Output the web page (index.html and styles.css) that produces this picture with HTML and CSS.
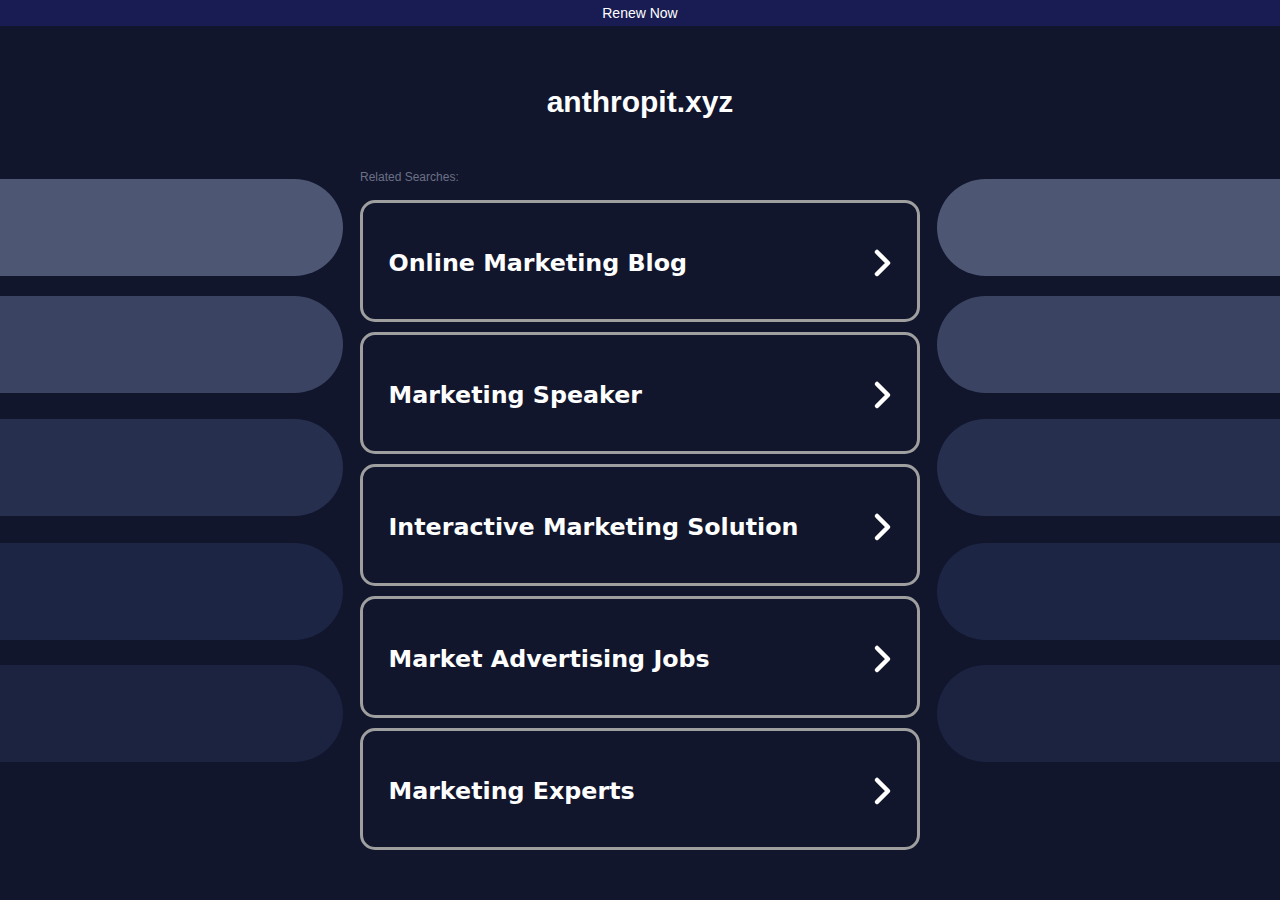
FILE: index.html
```html
<!DOCTYPE html>
<html>
<head>
<meta charset="utf-8">
<link rel="stylesheet" href="styles.css">
</head>
<body>
<div class="topbar"><a class="renew" href="#">Renew Now</a></div>
<h1 class="domain">anthropit.xyz</h1>
<div class="layout">
  <div class="side side-left">
    <div class="pill p1"></div>
    <div class="pill p2"></div>
    <div class="pill p3"></div>
    <div class="pill p4"></div>
    <div class="pill p5"></div>
  </div>
  <div class="center">
    <div class="related">Related Searches:</div>
    <div class="cards">
      <a class="card" href="#"><span class="label">Online Marketing Blog</span><svg class="chev" viewBox="0 0 20 30"><path d="M4 4 L15 15 L4 26" fill="none" stroke="#fff" stroke-width="4.5" stroke-linecap="round" stroke-linejoin="round"/></svg></a>
      <a class="card" href="#"><span class="label">Marketing Speaker</span><svg class="chev" viewBox="0 0 20 30"><path d="M4 4 L15 15 L4 26" fill="none" stroke="#fff" stroke-width="4.5" stroke-linecap="round" stroke-linejoin="round"/></svg></a>
      <a class="card" href="#"><span class="label">Interactive Marketing Solution</span><svg class="chev" viewBox="0 0 20 30"><path d="M4 4 L15 15 L4 26" fill="none" stroke="#fff" stroke-width="4.5" stroke-linecap="round" stroke-linejoin="round"/></svg></a>
      <a class="card" href="#"><span class="label">Market Advertising Jobs</span><svg class="chev" viewBox="0 0 20 30"><path d="M4 4 L15 15 L4 26" fill="none" stroke="#fff" stroke-width="4.5" stroke-linecap="round" stroke-linejoin="round"/></svg></a>
      <a class="card" href="#"><span class="label">Marketing Experts</span><svg class="chev" viewBox="0 0 20 30"><path d="M4 4 L15 15 L4 26" fill="none" stroke="#fff" stroke-width="4.5" stroke-linecap="round" stroke-linejoin="round"/></svg></a>
    </div>
  </div>
  <div class="side side-right">
    <div class="pill p1"></div>
    <div class="pill p2"></div>
    <div class="pill p3"></div>
    <div class="pill p4"></div>
    <div class="pill p5"></div>
  </div>
</div>
</body>
</html>
```
FILE: styles.css
```css
html, body {
  margin: 0;
  padding: 0;
  background: #11162d;
  height: 100%;
}
body {
  font-family: "Liberation Sans", Arial, sans-serif;
  overflow: hidden;
}
.topbar {
  height: 26px;
  background: #181c52;
  display: flex;
  justify-content: center;
  align-items: center;
}
.renew {
  color: #ffffff;
  font-size: 14px;
  text-decoration: none;
  line-height: 26px;
}
.domain {
  margin: 58px 0 0;
  text-align: center;
  color: #ffffff;
  font-size: 30px;
  font-weight: bold;
  line-height: 36px;
}
.layout {
  display: grid;
  grid-template-columns: 1fr 560px 1fr;
  column-gap: 17px;
  margin-top: 50px;
}
.side {
  display: flex;
  flex-direction: column;
  padding-top: 9px;
}
.pill {
  height: 97px;
  border-radius: 48.5px;
}
.side-left .pill { border-top-left-radius: 0; border-bottom-left-radius: 0; }
.side-right .pill { border-top-right-radius: 0; border-bottom-right-radius: 0; }
.p1 { background: #4d5672; }
.p2 { background: #3a4462; margin-top: 20px; }
.p3 { background: #272f4e; margin-top: 26px; }
.p4 { background: #1d2545; margin-top: 27px; }
.p5 { background: #1b2341; margin-top: 25px; }
.center {
  display: flex;
  flex-direction: column;
}
.related {
  color: #6b7085;
  font-size: 12px;
  line-height: 14px;
  height: 14px;
  margin-bottom: 16px;
}
.cards {
  display: flex;
  flex-direction: column;
  gap: 10px;
}
.card {
  box-sizing: border-box;
  height: 122px;
  border: 3.5px solid #9f9f9f;
  border-radius: 15px;
  display: flex;
  align-items: center;
  justify-content: space-between;
  padding: 3px 24px 0 25.5px;
  text-decoration: none;
}
.label {
  color: #ffffff;
  font-family: "DejaVu Sans", Verdana, sans-serif;
  font-weight: bold;
  font-size: 23.75px;
}
.chev {
  width: 20px;
  height: 30px;
  display: block;
}
```
